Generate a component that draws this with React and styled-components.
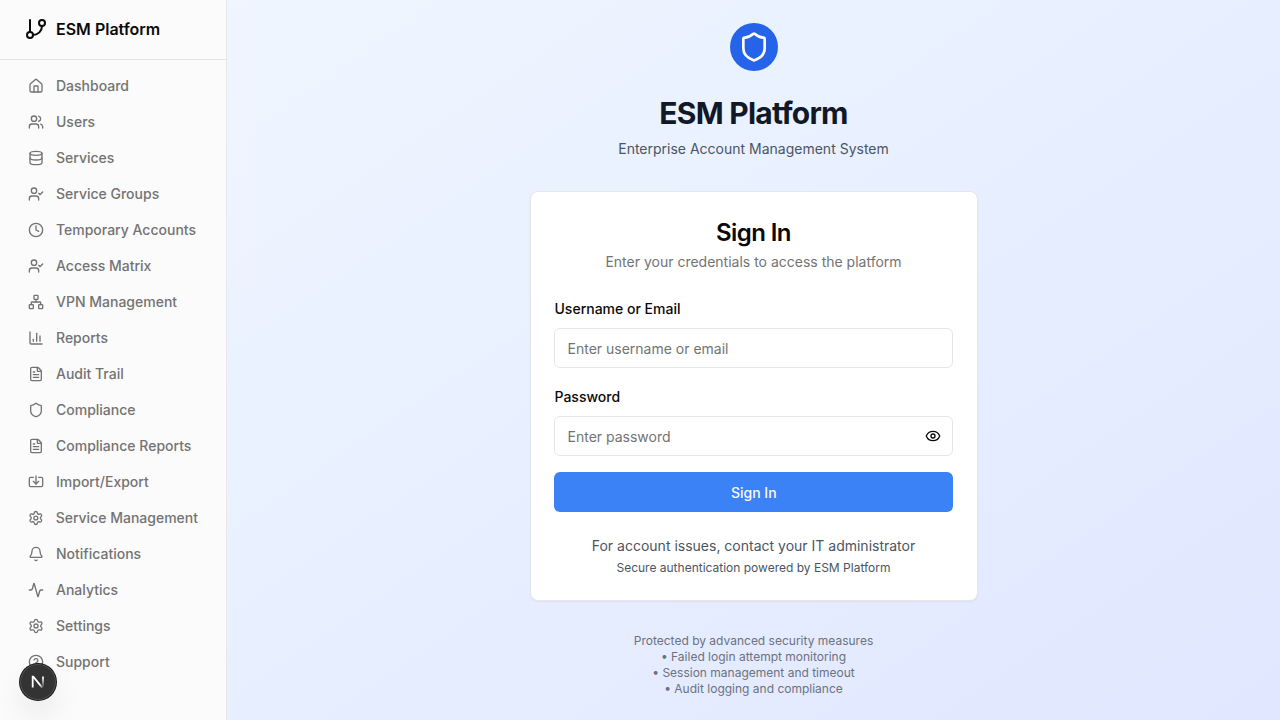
import React from "react";
import styled, { createGlobalStyle } from "styled-components";
import {
  Activity,
  Bell,
  ChartColumn,
  CircleQuestionMark,
  Clock,
  Database,
  Eye,
  FileText,
  GitBranch,
  House,
  Import,
  Network,
  Settings,
  Shield,
  UserCheck,
  Users,
} from "lucide-react";

const GlobalStyle = createGlobalStyle`
  *, *::before, *::after { box-sizing: border-box; }
  body {
    margin: 0;
    font-family: Inter, "Liberation Sans", sans-serif;
    font-size: 16px;
    line-height: 24px;
    color: #0a0a0a;
    background: #ffffff;
  }
  h1, h2, p { margin: 0; }
`;

const Layout = styled.div`
  display: grid;
  grid-template-columns: 227px 1fr;
  height: 100vh;
  overflow: hidden;
`;

const Sidebar = styled.aside`
  display: flex;
  flex-direction: column;
  background: #fbfbfb;
  border-right: 1px solid #e8e8ea;
`;

const Brand = styled.div`
  display: flex;
  align-items: center;
  gap: 8px;
  flex: none;
  height: 60px;
  padding: 0 24px 1px;
  border-bottom: 1px solid #e5e5e5;
  font-weight: 600;
`;

const Nav = styled.nav`
  display: flex;
  flex-direction: column;
  padding: 8px 16px;
`;

const NavItem = styled.a`
  display: flex;
  align-items: center;
  gap: 12px;
  padding: 8px 12px;
  border-radius: 8px;
  font-size: 14px;
  line-height: 20px;
  font-weight: 500;
  color: #737373;
  white-space: nowrap;
`;

const Main = styled.main`
  display: flex;
  align-items: center;
  justify-content: center;
  background: linear-gradient(to bottom right, #eff6ff, #e0e7ff);
`;

const Content = styled.div`
  display: flex;
  flex-direction: column;
  gap: 32px;
  width: 448px;
`;

const Intro = styled.header`
  display: flex;
  flex-direction: column;
  align-items: center;
`;

const ShieldBadge = styled.div`
  display: flex;
  align-items: center;
  justify-content: center;
  width: 48px;
  height: 48px;
  border-radius: 50%;
  background: #2563eb;
  color: #ffffff;
`;

const Title = styled.h1`
  margin-top: 24px;
  font-size: 30px;
  line-height: 36px;
  font-weight: 700;
  letter-spacing: -0.025em;
  color: #111827;
`;

const Subtitle = styled.p`
  margin-top: 8px;
  font-size: 14px;
  line-height: 20px;
  color: #4b5563;
`;

const Card = styled.section`
  padding: 24px;
  border: 1px solid #e5e7eb;
  border-radius: 8px;
  background: #ffffff;
  box-shadow: 0 1px 2px rgba(0, 0, 0, 0.05);
`;

const CardHeader = styled.div`
  display: flex;
  flex-direction: column;
  gap: 3px;
  margin-bottom: 24px;
  padding-top: 1px;
  text-align: center;
`;

const CardTitle = styled.h2`
  font-size: 24px;
  line-height: 32px;
  font-weight: 600;
  letter-spacing: -0.025em;
`;

const CardDescription = styled.p`
  font-size: 14px;
  line-height: 20px;
  color: #737373;
`;

const Form = styled.form`
  display: flex;
  flex-direction: column;
  gap: 16px;
  margin-left: -0.5px;
`;

const Field = styled.div`
  display: flex;
  flex-direction: column;
  gap: 8px;
`;

const Label = styled.label`
  padding-left: 0.5px;
  font-size: 14px;
  line-height: 14px;
  font-weight: 500;
`;

const InputShell = styled.div`
  display: flex;
  align-items: center;
  height: 40px;
  padding: 0 11px 0 12.5px;
  border: 1px solid #e5e5e5;
  border-radius: 6px;
  background: #ffffff;
`;

const Input = styled.input`
  flex: 1;
  min-width: 0;
  height: 21px;
  padding: 1px 0 0;
  border: 0;
  outline: 0;
  background: transparent;
  font: 400 14px/20px Inter, "Liberation Sans", sans-serif;
  color: #0a0a0a;

  &::placeholder {
    color: #737373;
  }
`;

const IconButton = styled.button`
  display: flex;
  padding: 0;
  border: 0;
  background: transparent;
  color: #0a0a0a;
`;

const SubmitButton = styled.button`
  height: 40px;
  padding: 2px 16px 0 17px;
  border: 0;
  border-radius: 6px;
  background: #3b82f6;
  color: #fafafa;
  font: 500 14px/20px Inter, "Liberation Sans", sans-serif;
`;

const CardFooter = styled.div`
  display: flex;
  flex-direction: column;
  gap: 4px;
  margin-top: 24px;
  text-align: center;
  color: #4b5563;
`;

const Note = styled.p`
  font-size: ${(p) => (p.$small ? 12 : 14)}px;
  line-height: ${(p) => (p.$small ? 16 : 20)}px;
`;

const Security = styled.footer`
  text-align: center;
  font-size: 12px;
  line-height: 16px;
  color: #6b7280;
`;

const DevBadge = styled.div`
  position: fixed;
  left: 20px;
  bottom: 20px;
  display: flex;
  align-items: center;
  justify-content: center;
  width: 36px;
  height: 36px;
  border-radius: 50%;
  background: #333333;
  box-shadow:
    0 0 0 1px #171717,
    inset 0 0 0 1px rgba(255, 255, 255, 0.14),
    0 16px 32px -8px rgba(0, 0, 0, 0.24);
`;

const navItems = [
  ["Dashboard", House],
  ["Users", Users],
  ["Services", Database],
  ["Service Groups", UserCheck],
  ["Temporary Accounts", Clock],
  ["Access Matrix", UserCheck],
  ["VPN Management", Network],
  ["Reports", ChartColumn],
  ["Audit Trail", FileText],
  ["Compliance", Shield],
  ["Compliance Reports", FileText],
  ["Import/Export", Import],
  ["Service Management", Settings],
  ["Notifications", Bell],
  ["Analytics", Activity],
  ["Settings", Settings],
  ["Support", CircleQuestionMark],
];

function NextMark() {
  return (
    <svg width="14" height="14" viewBox="0 0 14 14" fill="none">
      <defs>
        <linearGradient id="diagonal" x1="8.5" y1="9.5" x2="12.5" y2="14.5" gradientUnits="userSpaceOnUse">
          <stop stopColor="#fff" />
          <stop offset="1" stopColor="#fff" stopOpacity="0" />
        </linearGradient>
        <linearGradient id="stem" x1="11.9" y1="3" x2="11.9" y2="13" gradientUnits="userSpaceOnUse">
          <stop stopColor="#fff" />
          <stop offset="1" stopColor="#fff" stopOpacity="0" />
        </linearGradient>
      </defs>
      <path d="M1.7 12.6V1.7H2.3L11.2 12.6" stroke="url(#diagonal)" strokeWidth="1.8" />
      <path d="M12 1.5V12.6" stroke="url(#stem)" strokeWidth="1.7" />
    </svg>
  );
}

export default function App() {
  return (
    <>
      <GlobalStyle />
      <Layout>
        <Sidebar>
          <Brand>
            <GitBranch size={24} />
            <span>ESM Platform</span>
          </Brand>
          <Nav>
            {navItems.map(([label, Icon]) => (
              <NavItem key={label}>
                <Icon size={16} />
                {label}
              </NavItem>
            ))}
          </Nav>
        </Sidebar>
        <Main>
          <Content>
            <Intro>
              <ShieldBadge>
                <Shield size={32} />
              </ShieldBadge>
              <Title>ESM Platform</Title>
              <Subtitle>Enterprise Account Management System</Subtitle>
            </Intro>
            <Card>
              <CardHeader>
                <CardTitle>Sign In</CardTitle>
                <CardDescription>Enter your credentials to access the platform</CardDescription>
              </CardHeader>
              <Form>
                <Field>
                  <div>
                    <Label htmlFor="username">Username or Email</Label>
                  </div>
                  <InputShell>
                    <Input id="username" placeholder="Enter username or email" />
                  </InputShell>
                </Field>
                <Field>
                  <div>
                    <Label htmlFor="password">Password</Label>
                  </div>
                  <InputShell>
                    <Input id="password" type="password" placeholder="Enter password" />
                    <IconButton type="button" aria-label="Show password">
                      <Eye size={16} />
                    </IconButton>
                  </InputShell>
                </Field>
                <SubmitButton type="button">Sign In</SubmitButton>
              </Form>
              <CardFooter>
                <Note>For account issues, contact your IT administrator</Note>
                <Note $small>Secure authentication powered by ESM Platform</Note>
              </CardFooter>
            </Card>
            <Security>
              <p>Protected by advanced security measures</p>
              <p>• Failed login attempt monitoring</p>
              <p>• Session management and timeout</p>
              <p>• Audit logging and compliance</p>
            </Security>
          </Content>
        </Main>
      </Layout>
      <DevBadge>
        <NextMark />
      </DevBadge>
    </>
  );
}
